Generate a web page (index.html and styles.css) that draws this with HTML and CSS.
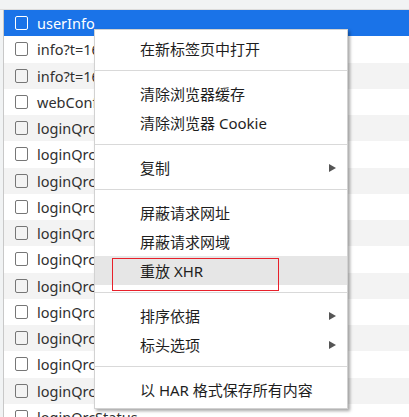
FILE: index.html
```html
<!DOCTYPE html>
<html lang="zh-CN">
<head>
<meta charset="utf-8">
<title>Network</title>
<link rel="stylesheet" href="styles.css">
</head>
<body>
<div class="page">
  <div class="topbar"></div>
  <div class="main">
    <div class="gutter"></div>
    <div class="list">
      <div class="row selected"><span class="cb"></span><span class="name">userInfo</span></div>
      <div class="row"><span class="cb"></span><span class="name">info?t=1663145530021</span></div>
      <div class="row"><span class="cb"></span><span class="name">info?t=1663145530188</span></div>
      <div class="row"><span class="cb"></span><span class="name">webConfig</span></div>
      <div class="row"><span class="cb"></span><span class="name">loginQrcStatus</span></div>
      <div class="row"><span class="cb"></span><span class="name">loginQrcStatus</span></div>
      <div class="row"><span class="cb"></span><span class="name">loginQrcStatus</span></div>
      <div class="row"><span class="cb"></span><span class="name">loginQrcStatus</span></div>
      <div class="row"><span class="cb"></span><span class="name">loginQrcStatus</span></div>
      <div class="row"><span class="cb"></span><span class="name">loginQrcStatus</span></div>
      <div class="row"><span class="cb"></span><span class="name">loginQrcStatus</span></div>
      <div class="row"><span class="cb"></span><span class="name">loginQrcStatus</span></div>
      <div class="row"><span class="cb"></span><span class="name">loginQrcStatus</span></div>
      <div class="row"><span class="cb"></span><span class="name">loginQrcStatus</span></div>
      <div class="row"><span class="cb"></span><span class="name">loginQrcStatus</span></div>
      <div class="row"><span class="cb"></span><span class="name">loginQrcStatus</span></div>
    </div>
  </div>

  <div class="menu">
    <div class="item">在新标签页中打开</div>
    <div class="sep"></div>
    <div class="item">清除浏览器缓存</div>
    <div class="item">清除浏览器 Cookie</div>
    <div class="sep"></div>
    <div class="item sub">复制<span class="arrow"></span></div>
    <div class="sep"></div>
    <div class="item">屏蔽请求网址</div>
    <div class="item">屏蔽请求网域</div>
    <div class="item hover">重放 XHR</div>
    <div class="sep"></div>
    <div class="item sub">排序依据<span class="arrow"></span></div>
    <div class="item sub">标头选项<span class="arrow"></span></div>
    <div class="sep"></div>
    <div class="item">以 HAR 格式保存所有内容</div>
  </div>

  <div class="mark"></div>
</div>
</body>
</html>
```

FILE: styles.css
```css
html, body {
  margin: 0;
  padding: 0;
  background: #ffffff;
}

.page {
  position: relative;
  width: 409px;
  height: 417px;
  overflow: hidden;
  font-family: "Noto Sans", "Noto Sans CJK SC", sans-serif;
}

.topbar {
  height: 9px;
  background: #f1f3f4;
  border-bottom: 1px solid #dcdcdc;
}

.main {
  display: flex;
}

.gutter {
  width: 3px;
  background: #f1f3f4;
  border-right: 1px solid #c8c8c8;
  flex: none;
}

.list {
  flex: 1;
  display: flex;
  flex-direction: column;
}

.row {
  height: 26.25px;
  display: flex;
  align-items: center;
  padding-left: 11px;
  gap: 9px;
  font-size: 14.5px;
  color: #303030;
  white-space: nowrap;
  background: #ffffff;
}

.row:nth-child(odd) {
  background: #f3f3f3;
}

.row.selected {
  background: #1a73e8;
  color: #ffffff;
}

.cb {
  width: 13px;
  height: 14px;
  box-sizing: border-box;
  border: 1.5px solid #767676;
  border-radius: 2px;
  flex: none;
}

.row.selected .cb {
  border-color: #ffffff;
}

.menu {
  position: absolute;
  left: 94px;
  top: 29px;
  width: 254px;
  box-sizing: border-box;
  padding: 4px 0;
  background: #ffffff;
  border: 1px solid #d2d2d2;
  box-shadow: 2px 2px 3px rgba(0, 0, 0, 0.35);
  font-family: "Noto Sans", "Noto Sans CJK SC", sans-serif;
  font-size: 15px;
  color: #1e1e1e;
}

.item {
  height: 29px;
  line-height: 30px;
  padding: 0 11px 0 45px;
  display: flex;
  align-items: center;
  justify-content: space-between;
  white-space: nowrap;
}

.item.hover {
  background: #e6e6e6;
}

.arrow {
  width: 0;
  height: 0;
  border-left: 7px solid #555555;
  border-top: 4.5px solid transparent;
  border-bottom: 4.5px solid transparent;
}

.sep {
  height: 1px;
  margin: 7px 0 8px;
  background: #d9d9d9;
}

.mark {
  position: absolute;
  left: 112px;
  top: 258px;
  width: 167px;
  height: 33px;
  box-sizing: border-box;
  border: 1px solid #e8202a;
}
```
